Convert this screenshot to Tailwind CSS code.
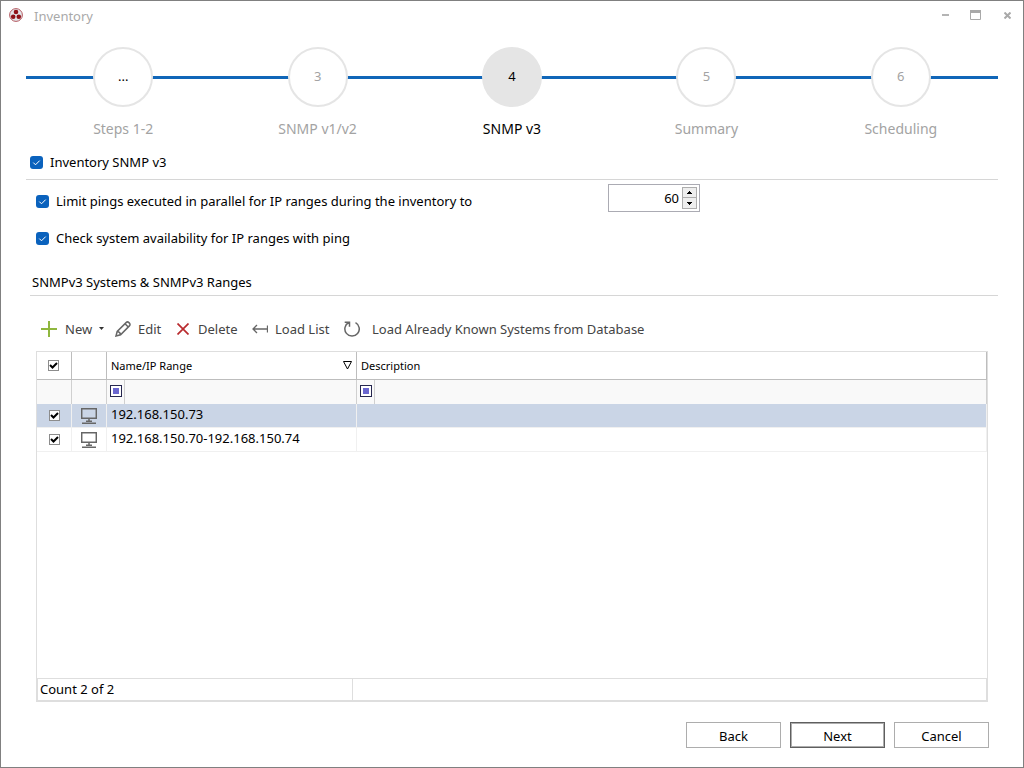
<!DOCTYPE html>
<html lang="en">
<head>
  <meta charset="UTF-8" />
  <meta name="viewport" content="width=device-width, initial-scale=1.0" />
  <title>Inventory</title>
  <script src="https://cdn.jsdelivr.net/npm/@tailwindcss/browser@4"></script>
</head>
<body class="min-h-screen flex flex-col border border-[#808080] bg-white text-black text-[13px] leading-5 font-['Noto_Sans',sans-serif]">

  <!-- Title bar -->
  <header class="flex items-center h-[30px] pb-[2px] pl-2 pr-3 text-[#a9a9a9]">
    <svg class="size-[14px]" viewBox="0 0 14 14">
      <circle cx="7" cy="7" r="6.4" fill="#e3e6ea" stroke="#b55a60" />
      <circle cx="7" cy="4" r="2.3" fill="#8f1218" />
      <circle cx="4.2" cy="8.7" r="2.3" fill="#8f1218" />
      <circle cx="9.8" cy="8.7" r="2.3" fill="#8f1218" />
    </svg>
    <h1 class="ml-[11px] pt-[2px]">Inventory</h1>
    <div class="ml-auto flex items-center">
      <button type="button" aria-label="Minimize" class="mr-[21px]">
        <svg class="w-[7px] h-[10px]" viewBox="0 0 7 10"><path d="M0 4h7v2H0z" fill="#b4b4b4" /></svg>
      </button>
      <button type="button" aria-label="Maximize" class="mr-[23px]">
        <svg class="w-[11px] h-[10px]" viewBox="0 0 11 10"><path d="M.5.5h10v9H.5z" fill="none" stroke="#a9a9a9" /><path d="M0 0h11v3H0z" fill="#a9a9a9" /></svg>
      </button>
      <button type="button" aria-label="Close">
        <svg class="w-[7px] h-[7px]" viewBox="0 0 7 7"><path d="M.5.5l6 6M6.5.5l-6 6" stroke="#a9a9a9" stroke-width="2" /></svg>
      </button>
    </div>
  </header>

  <main class="flex-1 flex flex-col px-[25px]">
    <!-- Wizard steps -->
    <nav class="relative mt-4" aria-label="Steps">
      <div class="absolute inset-x-0 top-[29px] h-[3px] bg-[#1066b8]"></div>
      <ol class="relative grid grid-cols-5 text-center text-[14px] text-[#a3a3a3]">
        <li class="flex flex-col items-center gap-3">
          <span class="grid place-items-center size-[60px] pb-[2px] rounded-full border-2 border-[#e5e5e5] bg-white text-[13px] text-black">...</span>
          Steps 1-2
        </li>
        <li class="flex flex-col items-center gap-3">
          <span class="grid place-items-center size-[60px] pb-[2px] rounded-full border-2 border-[#e5e5e5] bg-white text-[13px]">3</span>
          SNMP v1/v2
        </li>
        <li class="flex flex-col items-center gap-3 text-black" aria-current="step">
          <span class="grid place-items-center size-[60px] pb-[2px] rounded-full bg-[#e5e5e5] text-[13px]">4</span>
          SNMP v3
        </li>
        <li class="flex flex-col items-center gap-3">
          <span class="grid place-items-center size-[60px] pb-[2px] rounded-full border-2 border-[#e5e5e5] bg-white text-[13px]">5</span>
          Summary
        </li>
        <li class="flex flex-col items-center gap-3">
          <span class="grid place-items-center size-[60px] pb-[2px] rounded-full border-2 border-[#e5e5e5] bg-white text-[13px]">6</span>
          Scheduling
        </li>
      </ol>
    </nav>

    <label class="flex items-center gap-[7px] h-[41px] pl-1 pt-3 pb-[6px] border-b border-[#d6d6d6]">
      <span class="grid">
        <input type="checkbox" checked class="col-start-1 row-start-1 appearance-none size-[13px] rounded-[3px] bg-[#0a62bd]" />
        <svg class="col-start-1 row-start-1 size-[13px] pointer-events-none" viewBox="0 0 13 13" fill="none" stroke="#fff"><path d="M3.3 6.6l2.2 2.2 4.2-4.2" /></svg>
      </span>
      Inventory SNMP v3
    </label>

    <div class="flex items-center h-9 mt-[2px] pl-[10px]">
      <label for="limit" class="flex items-center gap-[7px] w-[572px] pt-[2px]">
        <span class="grid">
          <input id="limit" type="checkbox" checked class="col-start-1 row-start-1 appearance-none size-[13px] rounded-[3px] bg-[#0a62bd]" />
          <svg class="col-start-1 row-start-1 size-[13px] pointer-events-none" viewBox="0 0 13 13" fill="none" stroke="#fff"><path d="M3.3 6.6l2.2 2.2 4.2-4.2" /></svg>
        </span>
        Limit pings executed in parallel for IP ranges during the inventory to
      </label>
      <div class="flex items-center w-[92px] h-7 mb-1 pr-[2px] border border-[#ababb3]">
        <input id="pings" type="text" value="60" aria-label="Parallel pings" class="flex-1 min-w-0 pr-[3px] text-right outline-none" />
        <div class="flex flex-col border border-[#adadad]">
          <button type="button" aria-label="Increase" onclick="step(1)" class="grid place-items-center w-[13px] h-[10px] bg-[#eee] border-b border-[#adadad]">
            <svg class="w-[5px] h-[3px]" viewBox="0 0 5 3"><path d="M2 0h1v1h1v1h1v1H0V2h1V1h1z" /></svg>
          </button>
          <button type="button" aria-label="Decrease" onclick="step(-1)" class="grid place-items-center w-[13px] h-[10px] bg-[#eee]">
            <svg class="w-[5px] h-[3px]" viewBox="0 0 5 3"><path d="M0 0h5v1H4v1H3v1H2V2H1V1H0z" /></svg>
          </button>
        </div>
      </div>
    </div>

    <label class="flex items-center gap-[7px] h-9 mt-[2px] pl-[10px]">
      <span class="grid">
        <input type="checkbox" checked class="col-start-1 row-start-1 appearance-none size-[13px] rounded-[3px] bg-[#0a62bd]" />
        <svg class="col-start-1 row-start-1 size-[13px] pointer-events-none" viewBox="0 0 13 13" fill="none" stroke="#fff"><path d="M3.3 6.6l2.2 2.2 4.2-4.2" /></svg>
      </span>
      Check system availability for IP ranges with ping
    </label>

    <h2 class="mt-4 ml-1 pl-[2px] pb-[3px] border-b border-[#d6d6d6]">SNMPv3 Systems &amp; SNMPv3 Ranges</h2>

    <!-- Toolbar -->
    <div class="flex items-center h-[55px] pt-[10px] pl-[15px] text-[#444]">
      <button type="button" class="flex items-center w-[74px]">
        <svg class="size-4" viewBox="0 0 16 16" stroke="#8fb73e" stroke-width="2"><path d="M8 0v16M0 8h16" /></svg>
        <span class="ml-2">New</span>
        <svg class="ml-[7px] w-[5px] h-[3px]" viewBox="0 0 5 3"><path d="M0 0h5L2.500 3z" fill="#333" /></svg>
      </button>
      <button type="button" class="flex items-center w-[62px]">
        <svg class="size-4" viewBox="0 0 16 16" fill="none" stroke="#666" stroke-width="1.500"><path d="M1 15l1.200-4.600 8.900-8.800c.9-.9 2-.8 2.800 0l.5.500c.8.800.9 1.900 0 2.800l-8.800 8.900zM2.200 10.400c1.800.2 3.200 1.500 3.400 3.400M10 2.700l3.300 3.300" /></svg>
        <span class="ml-[7px]">Edit</span>
      </button>
      <button type="button" class="flex items-center w-[75px]">
        <svg class="size-3" viewBox="0 0 12 12" stroke="#b92b2f" stroke-width="1.700"><path d="M.5.5l11 11M11.500.5l-11 11" /></svg>
        <span class="ml-[9px]">Delete</span>
      </button>
      <button type="button" class="flex items-center w-[92px]">
        <svg class="w-4 h-3" viewBox="0 0 16 12" fill="none" stroke="#666" stroke-width="1.300"><path d="M1 6h15M5 2L1 6l4 4M15.500 2.500v7" /></svg>
        <span class="ml-[7px]">Load List</span>
      </button>
      <button type="button" class="flex items-center">
        <svg class="size-4" viewBox="0 0 16 16" fill="none" stroke="#666" stroke-width="1.500"><path d="M11.500 1.600A7.200 7.200 0 1 1 4.800 1.500M.7 1.200h4.800v4.600" /></svg>
        <span class="ml-3">Load Already Known Systems from Database</span>
      </button>
    </div>

    <!-- Grid -->
    <div class="flex-1 flex flex-col mx-[10px] border border-[#dedede]">
      <div class="flex-1">
        <table class="w-full table-fixed border-separate border-spacing-0 text-left">
          <colgroup>
            <col class="w-[35px]" />
            <col class="w-[35px]" />
            <col class="w-[250px]" />
            <col />
          </colgroup>
          <thead>
            <tr class="h-7 text-[11px]">
              <th class="border-r border-b border-[#bdbdbd] pl-[11px]">
                <span class="grid w-[11px]">
                  <input type="checkbox" checked aria-label="Select all" class="col-start-1 row-start-1 appearance-none size-[11px] border border-[#8c8c8c] bg-white" />
                  <svg class="col-start-1 row-start-1 size-[11px] pointer-events-none" viewBox="0 0 11 11" fill="none" stroke="#000" stroke-width="2"><path d="M2 5l2.500 2.500L9 3" /></svg>
                </span>
              </th>
              <th class="border-r border-b border-[#bdbdbd]"></th>
              <th class="border-r border-b border-[#bdbdbd] px-1 font-normal">
                <button type="button" class="flex w-full items-center justify-between">
                  Name/IP Range
                  <svg class="w-[9px] h-[9px]" viewBox="0 0 9 9" fill="none" stroke="#000"><path d="M.5.5h8L4.500 8z" /></svg>
                </button>
              </th>
              <th class="border-r border-b border-[#bdbdbd] px-1 font-normal">Description</th>
            </tr>
            <tr class="h-6 bg-[#f9f9f9]">
              <td class="border-r border-[#d0d0d0]"></td>
              <td class="border-r border-[#d0d0d0]"></td>
              <td class="p-0 border-r border-[#d0d0d0]">
                <div class="flex items-center w-[18px] h-6 pb-[2px] pl-[3px] border-r border-[#d0d0d0]">
                  <button type="button" aria-label="Filter name" class="size-3 border border-[#26264f] bg-white p-[2px]"><span class="block size-full bg-[#6a66cf]"></span></button>
                </div>
              </td>
              <td class="p-0 border-r border-[#d0d0d0]">
                <div class="flex items-center w-[18px] h-6 pb-[2px] pl-[3px] border-r border-[#d0d0d0]">
                  <button type="button" aria-label="Filter description" class="size-3 border border-[#26264f] bg-white p-[2px]"><span class="block size-full bg-[#6a66cf]"></span></button>
                </div>
              </td>
            </tr>
          </thead>
          <tbody>
            <tr class="h-6 bg-[#cad5e6]">
              <td class="border-r border-b border-[#f0f0f0] pl-3">
                <span class="grid w-[11px]">
                  <input type="checkbox" checked aria-label="Select 192.168.150.73" class="col-start-1 row-start-1 appearance-none size-[11px] border border-[#8c8c8c] bg-white" />
                  <svg class="col-start-1 row-start-1 size-[11px] pointer-events-none" viewBox="0 0 11 11" fill="none" stroke="#000" stroke-width="2"><path d="M2 5l2.500 2.500L9 3" /></svg>
                </span>
              </td>
              <td class="border-r border-b border-[#f0f0f0] pl-[9px]">
                <svg class="size-4" viewBox="0 0 16 16" fill="none" stroke="#666" stroke-width="1.500"><path d="M.7.7h14.600v9.600H.7zM8 10.300v3M5 13.300h6M1 15.200h14" /></svg>
              </td>
              <td class="border-r border-b border-[#f0f0f0] px-1 pb-[3px]">192.168.150.73</td>
              <td class="border-r border-b border-[#f0f0f0]"></td>
            </tr>
            <tr class="h-6">
              <td class="border-r border-b border-[#f0f0f0] pl-3">
                <span class="grid w-[11px]">
                  <input type="checkbox" checked aria-label="Select 192.168.150.70-192.168.150.74" class="col-start-1 row-start-1 appearance-none size-[11px] border border-[#8c8c8c] bg-white" />
                  <svg class="col-start-1 row-start-1 size-[11px] pointer-events-none" viewBox="0 0 11 11" fill="none" stroke="#000" stroke-width="2"><path d="M2 5l2.500 2.500L9 3" /></svg>
                </span>
              </td>
              <td class="border-r border-b border-[#f0f0f0] pl-[9px]">
                <svg class="size-4" viewBox="0 0 16 16" fill="none" stroke="#666" stroke-width="1.500"><path d="M.7.7h14.600v9.600H.7zM8 10.300v3M5 13.300h6M1 15.200h14" /></svg>
              </td>
              <td class="border-r border-b border-[#f0f0f0] px-1 pb-[3px]">192.168.150.70-192.168.150.74</td>
              <td class="border-r border-b border-[#f0f0f0]"></td>
            </tr>
          </tbody>
        </table>
      </div>
      <div class="flex h-[23px] border border-[#dedede]">
        <div class="w-[315px] pl-[2px] border-r border-[#dedede]">Count 2 of 2</div>
      </div>
    </div>
  </main>

  <footer class="flex justify-end gap-[9px] pt-5 pb-[19px] pr-[34px]">
    <button type="button" class="w-[95px] h-[26px] pt-px border border-[#adadad]">Back</button>
    <button type="button" class="w-[95px] h-[26px] pt-px border border-[#5f5f5f] inset-ring inset-ring-[#adadad]">Next</button>
    <button type="button" class="w-[95px] h-[26px] pt-px border border-[#adadad]">Cancel</button>
  </footer>

<script>
  // Spinner buttons
  function step(n) {
    const box = document.getElementById("pings");
    box.value = Math.max(1, Number(box.value) + n);
  }
</script>
</body>
</html>
